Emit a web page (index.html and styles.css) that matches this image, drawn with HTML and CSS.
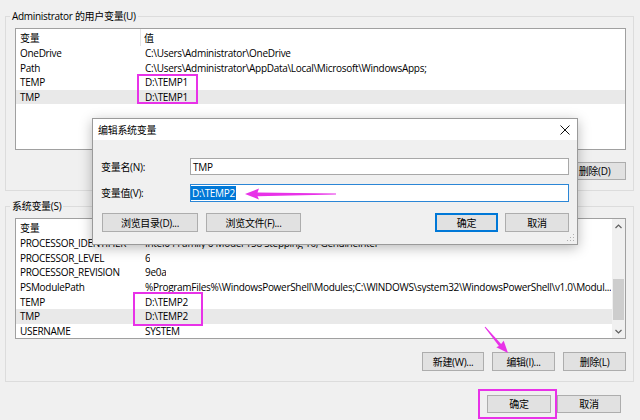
FILE: index.html
```html
<!DOCTYPE html>
<html lang="zh-CN">
<head>
<meta charset="utf-8">
<title>环境变量</title>
<link rel="stylesheet" href="styles.css">
</head>
<body>
<div class="window">
  <fieldset class="group group-user">
    <legend>Administrator 的用户变量(U)</legend>
    <div class="list">
      <div class="list-main">
        <div class="list-head"><span class="c1">变量</span><span class="c2">值</span></div>
        <div class="row"><span class="c1">OneDrive</span><span class="c2">C:\Users\Administrator\OneDrive</span></div>
        <div class="row"><span class="c1">Path</span><span class="c2">C:\Users\Administrator\AppData\Local\Microsoft\WindowsApps;</span></div>
        <div class="row"><span class="c1">TEMP</span><span class="c2">D:\TEMP1</span></div>
        <div class="row sel"><span class="c1">TMP</span><span class="c2">D:\TEMP1</span></div>
      </div>
    </div>
    <div class="btns">
      <button class="btn w-new">新建(N)...</button>
      <button class="btn">编辑(E)...</button>
      <button class="btn">删除(D)</button>
    </div>
  </fieldset>

  <fieldset class="group group-sys">
    <legend>系统变量(S)</legend>
    <div class="list">
      <div class="list-main">
        <div class="list-head"><span class="c1">变量</span><span class="c2">值</span></div>
        <div class="row"><span class="c1">PROCESSOR_IDENTIFIER</span><span class="c2">Intel64 Family 6 Model 158 Stepping 10, GenuineIntel</span></div>
        <div class="row"><span class="c1">PROCESSOR_LEVEL</span><span class="c2">6</span></div>
        <div class="row"><span class="c1">PROCESSOR_REVISION</span><span class="c2">9e0a</span></div>
        <div class="row"><span class="c1">PSModulePath</span><span class="c2">%ProgramFiles%\WindowsPowerShell\Modules;C:\WINDOWS\system32\WindowsPowerShell\v1.0\Modul...</span></div>
        <div class="row"><span class="c1">TEMP</span><span class="c2">D:\TEMP2</span></div>
        <div class="row sel"><span class="c1">TMP</span><span class="c2">D:\TEMP2</span></div>
        <div class="row"><span class="c1">USERNAME</span><span class="c2">SYSTEM</span></div>
      </div>
      <div class="scrollbar">
        <div class="sb-arrow">
          <svg width="7" height="5" viewBox="0 0 7 5"><path d="M0.5 4 L3.5 1 L6.5 4" fill="none" stroke="#606060" stroke-width="1.2"/></svg>
        </div>
        <div class="sb-track"><div class="sb-thumb"></div></div>
        <div class="sb-arrow">
          <svg width="7" height="5" viewBox="0 0 7 5"><path d="M0.5 1 L3.5 4 L6.5 1" fill="none" stroke="#606060" stroke-width="1.2"/></svg>
        </div>
      </div>
    </div>
    <div class="btns">
      <button class="btn w-new">新建(W)...</button>
      <button class="btn">编辑(I)...</button>
      <button class="btn">删除(L)</button>
    </div>
  </fieldset>

  <div class="footer">
    <button class="btn">确定</button>
    <button class="btn">取消</button>
  </div>
</div>

<div class="dialog">
  <div class="dlg-title">
    <span>编辑系统变量</span>
    <svg class="dlg-close" width="10" height="10" viewBox="0 0 10 10"><path d="M0.5 0.5 L9.5 9.5 M9.5 0.5 L0.5 9.5" stroke="#111" stroke-width="1"/></svg>
  </div>
  <div class="dlg-body">
    <div class="field">
      <span class="field-label">变量名(N):</span>
      <div class="textbox">TMP</div>
    </div>
    <div class="field">
      <span class="field-label">变量值(V):</span>
      <div class="textbox focus"><span class="selected">D:\TEMP2</span></div>
    </div>
    <div class="dlg-btns">
      <button class="btn b-browse1">浏览目录(D)...</button>
      <button class="btn b-browse2">浏览文件(F)...</button>
      <span class="spacer"></span>
      <button class="btn default">确定</button>
      <button class="btn">取消</button>
    </div>
  </div>
  <svg class="grip" width="8" height="8" viewBox="0 0 8 8">
    <rect x="6" y="0" width="1" height="1" fill="#b0b0b0"/>
    <rect x="3" y="3" width="1" height="1" fill="#b0b0b0"/>
    <rect x="6" y="3" width="1" height="1" fill="#b0b0b0"/>
    <rect x="0" y="6" width="1" height="1" fill="#b0b0b0"/>
    <rect x="3" y="6" width="1" height="1" fill="#b0b0b0"/>
    <rect x="6" y="6" width="1" height="1" fill="#b0b0b0"/>
  </svg>
</div>

<div class="mark mark-user"></div>
<div class="mark mark-sys"></div>
<div class="mark mark-ok"></div>

<svg class="arrows" width="640" height="420" viewBox="0 0 640 420">
  <polygon points="245,194 259,188.5 257.5,192.5 336,193.6 336,194.4 257.5,196.3 259,199.5" fill="#e832e8"/>
  <polygon points="508,353 496.3,347.3 498.9,346 484.6,327.3 485.4,326.7 501.1,344 503.7,340.7" fill="#e832e8"/>
</svg>
</body>
</html>
```

FILE: styles.css
```css
* {
  box-sizing: border-box;
}

body {
  margin: 0;
  width: 640px;
  height: 420px;
  overflow: hidden;
  position: relative;
  background: #f0f0f0;
  color: #000;
  font-family: "Open Sans", "Noto Sans CJK SC", sans-serif;
  font-size: 10px;
  line-height: 12px;
  letter-spacing: -0.3px;
}

.group {
  margin: 10px 6px 0 5px;
  border: 1px solid #dcdcdc;
  padding: 6px 7px 10px 9px;
  min-width: 0;
}

.group legend {
  padding: 0 2px;
  margin-left: -5px;
  line-height: 12px;
}

.group-sys {
  margin-top: 9px;
  padding-top: 6px;
}

.list {
  display: flex;
  background: #fff;
  border: 1px solid #a0a0a0;
  height: 122px;
  overflow: hidden;
}

.group-sys .list {
  height: 121px;
}

.list-main {
  flex: 1;
  min-width: 0;
}

.list-head {
  display: flex;
  height: 17px;
  align-items: stretch;
}

.list-head .c1 {
  width: 125px;
  border-right: 1px solid #e5e5e5;
  display: flex;
  align-items: center;
}

.list-head .c2 {
  padding-left: 3px;
  display: flex;
  align-items: center;
}

.row {
  display: flex;
  height: 14.6px;
  align-items: center;
  white-space: nowrap;
}

.row.sel {
  background: #e9e9e9;
}

.c1 {
  width: 129px;
  flex: none;
  padding-left: 4px;
  white-space: nowrap;
  overflow: hidden;
}

.c2 {
  white-space: nowrap;
  overflow: hidden;
}

.scrollbar {
  width: 13px;
  flex: none;
  display: flex;
  flex-direction: column;
  background: #f0f0f0;
}

.sb-arrow {
  height: 14px;
  display: flex;
  align-items: center;
  justify-content: center;
}

.sb-track {
  flex: 1;
  padding-top: 46px;
}

.sb-thumb {
  height: 41px;
  margin: 0 1px;
  background: #cdcdcd;
}

.btns {
  display: flex;
  justify-content: flex-end;
  gap: 8px;
  margin-top: 12px;
}

.group-sys .btns {
  margin-top: 13px;
}

.btn {
  font: inherit;
  letter-spacing: inherit;
  color: #000;
  height: 18px;
  width: 63px;
  padding: 0;
  background: #e1e1e1;
  border: 1px solid #adadad;
  line-height: 14px;
}

.group-sys .btn {
  height: 19px;
}

.btns .w-new {
  width: 62px;
}

.footer {
  display: flex;
  justify-content: flex-end;
  gap: 6px;
  padding: 13px 19px 0 0;
}

.footer .btn {
  width: 64px;
}

/* dialog window */
.dialog {
  position: absolute;
  left: 92px;
  top: 118px;
  width: 486px;
  height: 127px;
  background: #f0f0f0;
  border: 1px solid #9a9a9a;
  box-shadow: 0 3px 12px rgba(0, 0, 0, 0.28);
}

.dlg-title {
  height: 21px;
  background: #fff;
  display: flex;
  align-items: center;
  justify-content: space-between;
  padding: 0 7px 0 5px;
}

.dlg-close {
  display: block;
}

.dlg-body {
  padding: 18px 8px 0 8px;
}

.field {
  display: flex;
  align-items: center;
}

.field + .field {
  margin-top: 9px;
}

.field-label {
  width: 89px;
  flex: none;
}

.textbox {
  flex: 1;
  height: 17px;
  background: #fff;
  border: 1px solid #a8a8a8;
  padding-left: 2px;
  display: flex;
  align-items: center;
}

.textbox.focus {
  height: 18px;
  border-color: #2b86d6;
  padding-left: 0;
}

.selected {
  background: #0078d7;
  color: #fff;
  padding: 1px 1px 1px 1px;
}

.dlg-btns {
  display: flex;
  margin-top: 11px;
}

.dlg-btns .btn {
  height: 19px;
}

.b-browse1 {
  margin-left: 1px;
  width: 96px !important;
}

.b-browse2 {
  margin-left: 8px;
  width: 95px !important;
}

.spacer {
  flex: 1;
}

.dlg-btns .btn + .btn:last-child {
  margin-left: 7px;
  width: 64px;
}

.btn.default {
  border: 1px solid #0078d7;
  box-shadow: inset 0 0 0 1px #0078d7;
}

.grip {
  position: absolute;
  right: 2px;
  bottom: 2px;
}

/* annotations */
.mark {
  position: absolute;
  border: 2px solid #e832e8;
}

.mark-user {
  left: 137px;
  top: 74px;
  width: 61px;
  height: 30px;
}

.mark-sys {
  left: 133px;
  top: 292px;
  width: 70px;
  height: 34px;
}

.mark-ok {
  left: 478px;
  top: 389px;
  width: 79px;
  height: 30px;
}

.arrows {
  position: absolute;
  left: 0;
  top: 0;
  pointer-events: none;
}
```
